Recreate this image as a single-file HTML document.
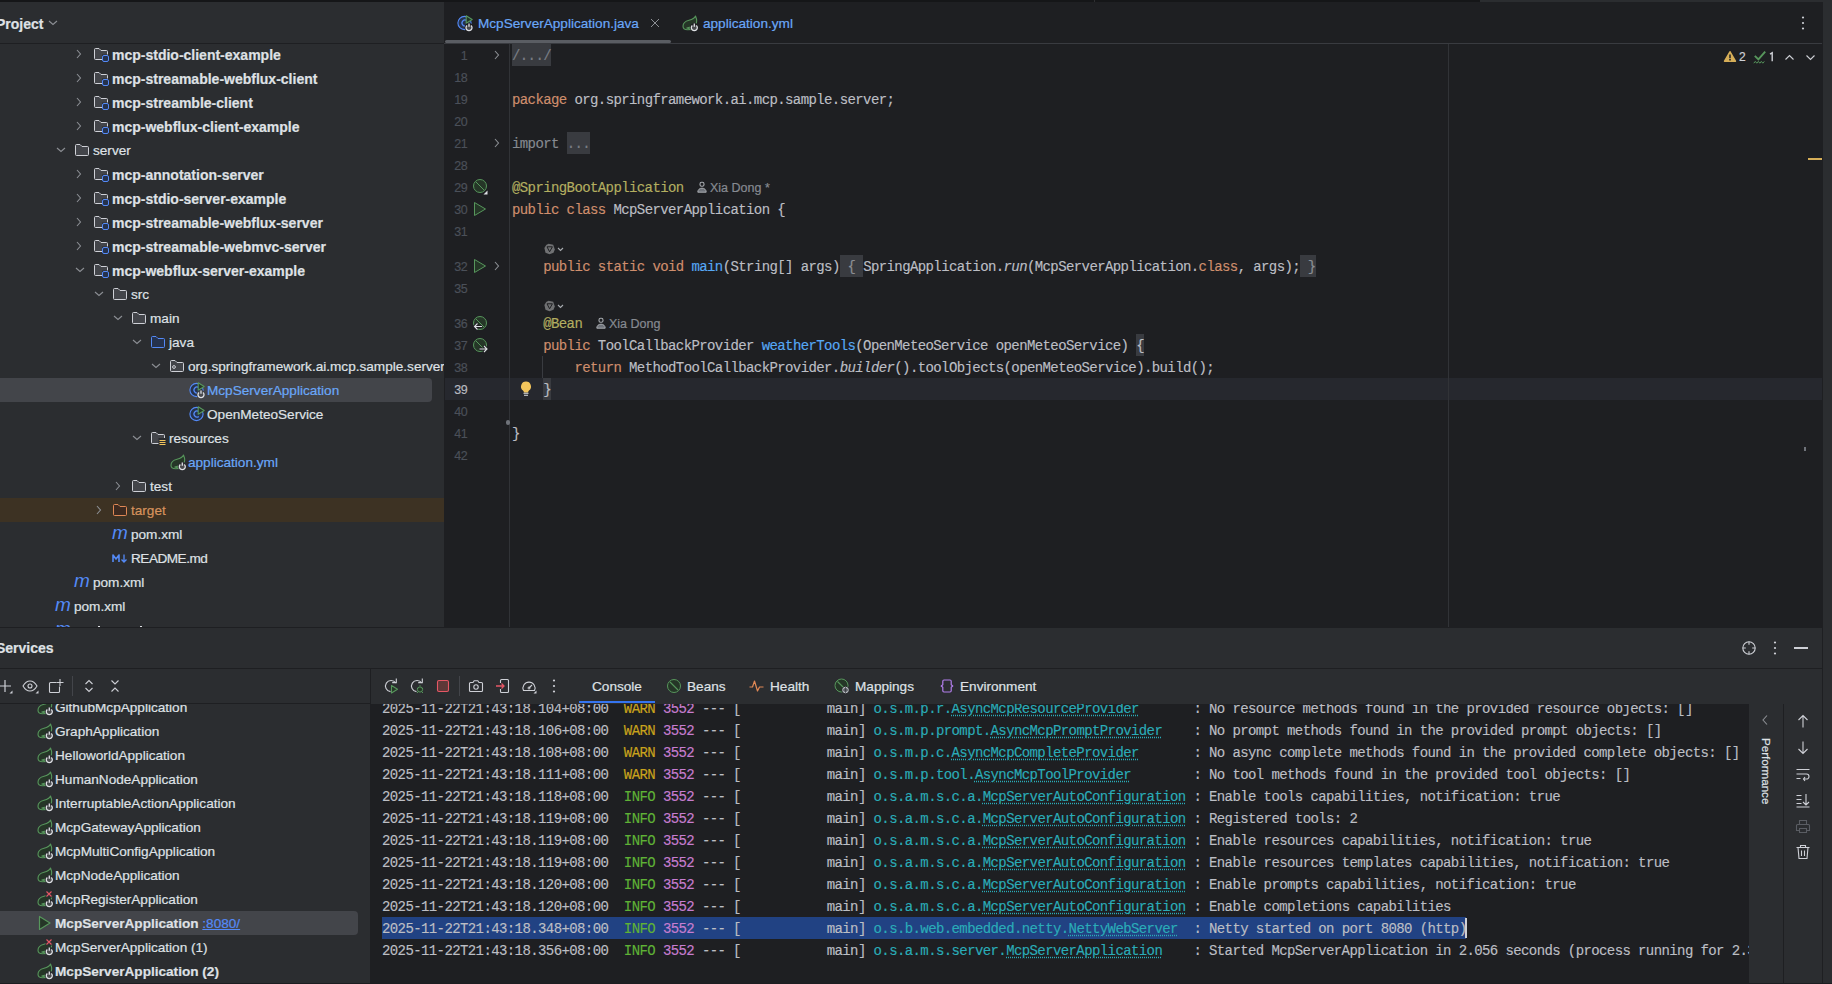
<!DOCTYPE html><html><head><meta charset="utf-8"><style>
*{margin:0;padding:0;box-sizing:border-box}
html,body{width:1832px;height:984px;overflow:hidden;background:#1E1F22}
body{position:relative;font-family:"Liberation Sans",sans-serif;color:#DFE1E5}
.a{position:absolute}
.ui{font-family:"Liberation Sans",sans-serif;font-size:13.6px;white-space:pre;color:#DFE1E5;-webkit-text-stroke:0.2px currentColor}
.b{font-weight:700;font-size:14px}
.m{font-family:"Liberation Mono",monospace;font-size:14px;letter-spacing:-0.6px;white-space:pre;color:#BCBEC4;-webkit-text-stroke:0.15px currentColor}
.kw{color:#CF8E6D}
.an{color:#B3AE60}
.fn{color:#56A8F5}
.it{font-style:italic}
.fold{}
svg{position:absolute;overflow:visible}
</style></head><body>
<div class="a" style="left:0;top:0;width:1832px;height:2px;background:#151618"></div>
<div class="a" style="left:1480px;top:0;width:352px;height:2px;background:#2B2D30"></div>
<div class="a" style="left:1094px;top:0;width:1px;height:2px;background:#2E2F31"></div>
<div class="a" style="left:0;top:2px;width:444px;height:625px;background:#2B2D30;overflow:hidden">
<div class="a" style="left:0;top:41px;width:444px;height:1px;background:#1E1F22"></div>
<div class="a ui b" style="left:-4px;top:13px;line-height:18px">Project</div>
<svg style="left:45px;top:17px" width="16" height="8" viewBox="0 0 16 8"><path d="M4 2l4 3.5L12 2" fill="none" stroke="#8C8F94" stroke-width="1.1"/></svg>
<div class="a" style="left:0;top:376px;width:432px;height:24px;background:#43454A;border-radius:0 4px 4px 0"></div>
<div class="a" style="left:0;top:496px;width:444px;height:24px;background:#3D3223"></div>
<svg style="left:75px;top:44px" width="8" height="16" viewBox="0 0 8 16"><path d="M2 4l3.5 4L2 12" fill="none" stroke="#8C8F94" stroke-width="1.1"/></svg>
<svg style="left:93px;top:44px" width="16" height="16" viewBox="0 0 16 16"><path d="M1.5 3.5a1 1 0 0 1 1-1h3.5l2 2h5.5a1 1 0 0 1 1 1v7a1 1 0 0 1-1 1h-11a1 1 0 0 1-1-1z" fill="#43454A" stroke="#CED0D6"/><rect x="9" y="8.5" width="7" height="7" fill="#2B2D30"/><rect x="9.5" y="9.5" width="6" height="6" rx="1.5" fill="#25324D" stroke="#548AF7"/></svg>
<div class="a ui b" style="left:112px;top:41px;line-height:24px">mcp-stdio-client-example</div>
<svg style="left:75px;top:68px" width="8" height="16" viewBox="0 0 8 16"><path d="M2 4l3.5 4L2 12" fill="none" stroke="#8C8F94" stroke-width="1.1"/></svg>
<svg style="left:93px;top:68px" width="16" height="16" viewBox="0 0 16 16"><path d="M1.5 3.5a1 1 0 0 1 1-1h3.5l2 2h5.5a1 1 0 0 1 1 1v7a1 1 0 0 1-1 1h-11a1 1 0 0 1-1-1z" fill="#43454A" stroke="#CED0D6"/><rect x="9" y="8.5" width="7" height="7" fill="#2B2D30"/><rect x="9.5" y="9.5" width="6" height="6" rx="1.5" fill="#25324D" stroke="#548AF7"/></svg>
<div class="a ui b" style="left:112px;top:65px;line-height:24px">mcp-streamable-webflux-client</div>
<svg style="left:75px;top:92px" width="8" height="16" viewBox="0 0 8 16"><path d="M2 4l3.5 4L2 12" fill="none" stroke="#8C8F94" stroke-width="1.1"/></svg>
<svg style="left:93px;top:92px" width="16" height="16" viewBox="0 0 16 16"><path d="M1.5 3.5a1 1 0 0 1 1-1h3.5l2 2h5.5a1 1 0 0 1 1 1v7a1 1 0 0 1-1 1h-11a1 1 0 0 1-1-1z" fill="#43454A" stroke="#CED0D6"/><rect x="9" y="8.5" width="7" height="7" fill="#2B2D30"/><rect x="9.5" y="9.5" width="6" height="6" rx="1.5" fill="#25324D" stroke="#548AF7"/></svg>
<div class="a ui b" style="left:112px;top:89px;line-height:24px">mcp-streamble-client</div>
<svg style="left:75px;top:116px" width="8" height="16" viewBox="0 0 8 16"><path d="M2 4l3.5 4L2 12" fill="none" stroke="#8C8F94" stroke-width="1.1"/></svg>
<svg style="left:93px;top:116px" width="16" height="16" viewBox="0 0 16 16"><path d="M1.5 3.5a1 1 0 0 1 1-1h3.5l2 2h5.5a1 1 0 0 1 1 1v7a1 1 0 0 1-1 1h-11a1 1 0 0 1-1-1z" fill="#43454A" stroke="#CED0D6"/><rect x="9" y="8.5" width="7" height="7" fill="#2B2D30"/><rect x="9.5" y="9.5" width="6" height="6" rx="1.5" fill="#25324D" stroke="#548AF7"/></svg>
<div class="a ui b" style="left:112px;top:113px;line-height:24px">mcp-webflux-client-example</div>
<svg style="left:53px;top:144px" width="16" height="8" viewBox="0 0 16 8"><path d="M4 2l4 3.5L12 2" fill="none" stroke="#8C8F94" stroke-width="1.1"/></svg>
<svg style="left:74px;top:140px" width="16" height="16" viewBox="0 0 16 16"><path d="M1.5 3.5a1 1 0 0 1 1-1h3.5l2 2h5.5a1 1 0 0 1 1 1v7a1 1 0 0 1-1 1h-11a1 1 0 0 1-1-1z" fill="#43454A" stroke="#CED0D6"/></svg>
<div class="a ui " style="left:93px;top:137px;line-height:24px">server</div>
<svg style="left:75px;top:164px" width="8" height="16" viewBox="0 0 8 16"><path d="M2 4l3.5 4L2 12" fill="none" stroke="#8C8F94" stroke-width="1.1"/></svg>
<svg style="left:93px;top:164px" width="16" height="16" viewBox="0 0 16 16"><path d="M1.5 3.5a1 1 0 0 1 1-1h3.5l2 2h5.5a1 1 0 0 1 1 1v7a1 1 0 0 1-1 1h-11a1 1 0 0 1-1-1z" fill="#43454A" stroke="#CED0D6"/><rect x="9" y="8.5" width="7" height="7" fill="#2B2D30"/><rect x="9.5" y="9.5" width="6" height="6" rx="1.5" fill="#25324D" stroke="#548AF7"/></svg>
<div class="a ui b" style="left:112px;top:161px;line-height:24px">mcp-annotation-server</div>
<svg style="left:75px;top:188px" width="8" height="16" viewBox="0 0 8 16"><path d="M2 4l3.5 4L2 12" fill="none" stroke="#8C8F94" stroke-width="1.1"/></svg>
<svg style="left:93px;top:188px" width="16" height="16" viewBox="0 0 16 16"><path d="M1.5 3.5a1 1 0 0 1 1-1h3.5l2 2h5.5a1 1 0 0 1 1 1v7a1 1 0 0 1-1 1h-11a1 1 0 0 1-1-1z" fill="#43454A" stroke="#CED0D6"/><rect x="9" y="8.5" width="7" height="7" fill="#2B2D30"/><rect x="9.5" y="9.5" width="6" height="6" rx="1.5" fill="#25324D" stroke="#548AF7"/></svg>
<div class="a ui b" style="left:112px;top:185px;line-height:24px">mcp-stdio-server-example</div>
<svg style="left:75px;top:212px" width="8" height="16" viewBox="0 0 8 16"><path d="M2 4l3.5 4L2 12" fill="none" stroke="#8C8F94" stroke-width="1.1"/></svg>
<svg style="left:93px;top:212px" width="16" height="16" viewBox="0 0 16 16"><path d="M1.5 3.5a1 1 0 0 1 1-1h3.5l2 2h5.5a1 1 0 0 1 1 1v7a1 1 0 0 1-1 1h-11a1 1 0 0 1-1-1z" fill="#43454A" stroke="#CED0D6"/><rect x="9" y="8.5" width="7" height="7" fill="#2B2D30"/><rect x="9.5" y="9.5" width="6" height="6" rx="1.5" fill="#25324D" stroke="#548AF7"/></svg>
<div class="a ui b" style="left:112px;top:209px;line-height:24px">mcp-streamable-webflux-server</div>
<svg style="left:75px;top:236px" width="8" height="16" viewBox="0 0 8 16"><path d="M2 4l3.5 4L2 12" fill="none" stroke="#8C8F94" stroke-width="1.1"/></svg>
<svg style="left:93px;top:236px" width="16" height="16" viewBox="0 0 16 16"><path d="M1.5 3.5a1 1 0 0 1 1-1h3.5l2 2h5.5a1 1 0 0 1 1 1v7a1 1 0 0 1-1 1h-11a1 1 0 0 1-1-1z" fill="#43454A" stroke="#CED0D6"/><rect x="9" y="8.5" width="7" height="7" fill="#2B2D30"/><rect x="9.5" y="9.5" width="6" height="6" rx="1.5" fill="#25324D" stroke="#548AF7"/></svg>
<div class="a ui b" style="left:112px;top:233px;line-height:24px">mcp-streamable-webmvc-server</div>
<svg style="left:72px;top:264px" width="16" height="8" viewBox="0 0 16 8"><path d="M4 2l4 3.5L12 2" fill="none" stroke="#8C8F94" stroke-width="1.1"/></svg>
<svg style="left:93px;top:260px" width="16" height="16" viewBox="0 0 16 16"><path d="M1.5 3.5a1 1 0 0 1 1-1h3.5l2 2h5.5a1 1 0 0 1 1 1v7a1 1 0 0 1-1 1h-11a1 1 0 0 1-1-1z" fill="#43454A" stroke="#CED0D6"/><rect x="9" y="8.5" width="7" height="7" fill="#2B2D30"/><rect x="9.5" y="9.5" width="6" height="6" rx="1.5" fill="#25324D" stroke="#548AF7"/></svg>
<div class="a ui b" style="left:112px;top:257px;line-height:24px">mcp-webflux-server-example</div>
<svg style="left:91px;top:288px" width="16" height="8" viewBox="0 0 16 8"><path d="M4 2l4 3.5L12 2" fill="none" stroke="#8C8F94" stroke-width="1.1"/></svg>
<svg style="left:112px;top:284px" width="16" height="16" viewBox="0 0 16 16"><path d="M1.5 3.5a1 1 0 0 1 1-1h3.5l2 2h5.5a1 1 0 0 1 1 1v7a1 1 0 0 1-1 1h-11a1 1 0 0 1-1-1z" fill="#43454A" stroke="#CED0D6"/></svg>
<div class="a ui " style="left:131px;top:281px;line-height:24px">src</div>
<svg style="left:110px;top:312px" width="16" height="8" viewBox="0 0 16 8"><path d="M4 2l4 3.5L12 2" fill="none" stroke="#8C8F94" stroke-width="1.1"/></svg>
<svg style="left:131px;top:308px" width="16" height="16" viewBox="0 0 16 16"><path d="M1.5 3.5a1 1 0 0 1 1-1h3.5l2 2h5.5a1 1 0 0 1 1 1v7a1 1 0 0 1-1 1h-11a1 1 0 0 1-1-1z" fill="#43454A" stroke="#CED0D6"/></svg>
<div class="a ui " style="left:150px;top:305px;line-height:24px">main</div>
<svg style="left:129px;top:336px" width="16" height="8" viewBox="0 0 16 8"><path d="M4 2l4 3.5L12 2" fill="none" stroke="#8C8F94" stroke-width="1.1"/></svg>
<svg style="left:150px;top:332px" width="16" height="16" viewBox="0 0 16 16"><path d="M1.5 3.5a1 1 0 0 1 1-1h3.5l2 2h5.5a1 1 0 0 1 1 1v7a1 1 0 0 1-1 1h-11a1 1 0 0 1-1-1z" fill="#25324D" stroke="#548AF7"/></svg>
<div class="a ui " style="left:169px;top:329px;line-height:24px">java</div>
<svg style="left:148px;top:360px" width="16" height="8" viewBox="0 0 16 8"><path d="M4 2l4 3.5L12 2" fill="none" stroke="#8C8F94" stroke-width="1.1"/></svg>
<svg style="left:169px;top:356px" width="16" height="16" viewBox="0 0 16 16"><path d="M1.5 3.5a1 1 0 0 1 1-1h3.5l2 2h5.5a1 1 0 0 1 1 1v7a1 1 0 0 1-1 1h-11a1 1 0 0 1-1-1z" fill="#43454A" stroke="#CED0D6"/><circle cx="5" cy="9" r="1.4" fill="none" stroke="#CED0D6" stroke-width="1"/></svg>
<div class="a ui " style="left:188px;top:353px;line-height:24px">org.springframework.ai.mcp.sample.server</div>
<svg style="left:189px;top:380px" width="16" height="16" viewBox="0 0 16 16"><circle cx="7.5" cy="8" r="6.6" fill="#25324D" stroke="#548AF7" stroke-width="1.1"/><path d="M9.8 5.6a3 3 0 1 0 0 4.8" fill="none" stroke="#548AF7" stroke-width="1.2"/><path d="M9.2 0.8v7.4l6-3.7z" fill="#253627" stroke="#57965C" stroke-width="1.1" stroke-linejoin="round"/><circle cx="12" cy="12.3" r="4.4" fill="#43454A"/><circle cx="12" cy="12.5" r="2.6" fill="#4A4B4F"/><path d="M10 10.4a3 3 0 1 0 4 0" fill="none" stroke="#DFE1E5" stroke-width="1.3"/><path d="M12 8.4v3.4" stroke="#DFE1E5" stroke-width="1.3"/></svg>
<div class="a ui " style="left:207px;top:377px;line-height:24px;color:#6AA7F8">McpServerApplication</div>
<svg style="left:189px;top:404px" width="16" height="16" viewBox="0 0 16 16"><circle cx="7.5" cy="8" r="6.6" fill="#25324D" stroke="#548AF7" stroke-width="1.1"/><path d="M9.8 5.6a3 3 0 1 0 0 4.8" fill="none" stroke="#548AF7" stroke-width="1.2"/><path d="M9.2 0.8v7.4l6-3.7z" fill="#253627" stroke="#57965C" stroke-width="1.1" stroke-linejoin="round"/></svg>
<div class="a ui " style="left:207px;top:401px;line-height:24px">OpenMeteoService</div>
<svg style="left:129px;top:432px" width="16" height="8" viewBox="0 0 16 8"><path d="M4 2l4 3.5L12 2" fill="none" stroke="#8C8F94" stroke-width="1.1"/></svg>
<svg style="left:150px;top:428px" width="16" height="16" viewBox="0 0 16 16"><path d="M1.5 3.5a1 1 0 0 1 1-1h3.5l2 2h5.5a1 1 0 0 1 1 1v7a1 1 0 0 1-1 1h-11a1 1 0 0 1-1-1z" fill="#43454A" stroke="#CED0D6"/><rect x="8.5" y="8" width="8" height="8" fill="#2B2D30"/><path d="M9.5 10.5h6M9.5 12.5h6M9.5 14.5h6" stroke="#F2C55C" stroke-width="1"/></svg>
<div class="a ui " style="left:169px;top:425px;line-height:24px">resources</div>
<svg style="left:170px;top:452px" width="16" height="16" viewBox="0 0 16 16"><path d="M13.5 1C12.5 3.5 10 4.5 7 5.3C3 6.300 1 8.800 1 11.300C1 14 3 14.800 5.500 14.800L11 14.500C8.500 14 6 13.700 4.800 13C8 12.500 11 12 13.300 10C15 8 15 4.500 13.500 1Z" fill="#253627" stroke="#57965C" stroke-width="1.1" stroke-linejoin="round"/><circle cx="12.3" cy="12.3" r="4.4" fill="#2B2D30"/><circle cx="12.3" cy="12.5" r="2.6" fill="#4A4B4F"/><path d="M10.3 10.4a3 3 0 1 0 4 0" fill="none" stroke="#DFE1E5" stroke-width="1.3"/><path d="M12.3 8.4v3.4" stroke="#DFE1E5" stroke-width="1.3"/></svg>
<div class="a ui " style="left:188px;top:449px;line-height:24px;color:#6AA7F8">application.yml</div>
<svg style="left:114px;top:476px" width="8" height="16" viewBox="0 0 8 16"><path d="M2 4l3.5 4L2 12" fill="none" stroke="#8C8F94" stroke-width="1.1"/></svg>
<svg style="left:131px;top:476px" width="16" height="16" viewBox="0 0 16 16"><path d="M1.5 3.5a1 1 0 0 1 1-1h3.5l2 2h5.5a1 1 0 0 1 1 1v7a1 1 0 0 1-1 1h-11a1 1 0 0 1-1-1z" fill="#43454A" stroke="#CED0D6"/></svg>
<div class="a ui " style="left:150px;top:473px;line-height:24px">test</div>
<svg style="left:95px;top:500px" width="8" height="16" viewBox="0 0 8 16"><path d="M2 4l3.5 4L2 12" fill="none" stroke="#8C8F94" stroke-width="1.1"/></svg>
<svg style="left:112px;top:500px" width="16" height="16" viewBox="0 0 16 16"><path d="M1.5 3.5a1 1 0 0 1 1-1h3.5l2 2h5.5a1 1 0 0 1 1 1v7a1 1 0 0 1-1 1h-11a1 1 0 0 1-1-1z" fill="#3D2A20" stroke="#E08855"/></svg>
<div class="a ui " style="left:131px;top:497px;line-height:24px;color:#D6925D">target</div>
<div class="a" style="left:112px;top:522px;font-family:'Liberation Sans';font-style:italic;font-size:19px;line-height:18px;color:#548AF7;letter-spacing:-1px">m</div>
<div class="a ui " style="left:131px;top:521px;line-height:24px">pom.xml</div>
<svg style="left:112px;top:548px" width="16" height="16" viewBox="0 0 16 16"><path d="M1 12V5l3 4 3-4v7" fill="none" stroke="#548AF7" stroke-width="1.6" stroke-linejoin="round"/><path d="M12 4.5v7.5M9.5 9.5L12 12l2.5-2.5" fill="none" stroke="#548AF7" stroke-width="1.3"/></svg>
<div class="a ui " style="left:131px;top:545px;line-height:24px;letter-spacing:-0.5px">README.md</div>
<div class="a" style="left:74px;top:570px;font-family:'Liberation Sans';font-style:italic;font-size:19px;line-height:18px;color:#548AF7;letter-spacing:-1px">m</div>
<div class="a ui " style="left:93px;top:569px;line-height:24px">pom.xml</div>
<div class="a" style="left:55px;top:594px;font-family:'Liberation Sans';font-style:italic;font-size:19px;line-height:18px;color:#548AF7;letter-spacing:-1px">m</div>
<div class="a ui " style="left:74px;top:593px;line-height:24px">pom.xml</div>
<div class="a" style="left:55px;top:618px;font-family:'Liberation Sans';font-style:italic;font-size:19px;line-height:18px;color:#548AF7;letter-spacing:-1px">m</div>
<div class="a" style="left:98px;top:624px;width:2px;height:2px;background:#DFE1E5"></div><div class="a" style="left:140px;top:624px;width:2px;height:2px;background:#DFE1E5"></div>
</div>
<div class="a" style="left:444px;top:2px;width:1378px;height:625px;background:#1E1F22;overflow:hidden">
<div class="a" style="left:0;top:41px;width:1378px;height:1px;background:#393B40"></div>
<svg style="left:13px;top:13px" width="16" height="16" viewBox="0 0 16 16"><circle cx="7.5" cy="8" r="6.6" fill="#25324D" stroke="#548AF7" stroke-width="1.1"/><path d="M9.8 5.6a3 3 0 1 0 0 4.8" fill="none" stroke="#548AF7" stroke-width="1.2"/><path d="M9.2 0.8v7.4l6-3.7z" fill="#253627" stroke="#57965C" stroke-width="1.1" stroke-linejoin="round"/><circle cx="12" cy="12.3" r="4.4" fill="#1E1F22"/><circle cx="12" cy="12.5" r="2.6" fill="#4A4B4F"/><path d="M10 10.4a3 3 0 1 0 4 0" fill="none" stroke="#DFE1E5" stroke-width="1.3"/><path d="M12 8.4v3.4" stroke="#DFE1E5" stroke-width="1.3"/></svg>
<div class="a ui" style="left:34px;top:10px;line-height:24px;color:#6AA7F8">McpServerApplication.java</div>
<svg style="left:206px;top:16px" width="10" height="10" viewBox="0 0 10 10"><path d="M1 1l8 8M9 1l-8 8" stroke="#8C8F94" stroke-width="1"/></svg>
<div class="a" style="left:1px;top:38px;width:226px;height:3px;border-radius:2px;background:#5A5D63"></div>
<svg style="left:238px;top:13px" width="16" height="16" viewBox="0 0 16 16"><path d="M13.5 1C12.5 3.5 10 4.5 7 5.3C3 6.300 1 8.800 1 11.300C1 14 3 14.800 5.500 14.800L11 14.500C8.500 14 6 13.700 4.800 13C8 12.500 11 12 13.300 10C15 8 15 4.500 13.500 1Z" fill="#253627" stroke="#57965C" stroke-width="1.1" stroke-linejoin="round"/><circle cx="12.3" cy="12.3" r="4.4" fill="#1E1F22"/><circle cx="12.3" cy="12.5" r="2.6" fill="#4A4B4F"/><path d="M10.3 10.4a3 3 0 1 0 4 0" fill="none" stroke="#DFE1E5" stroke-width="1.3"/><path d="M12.3 8.4v3.4" stroke="#DFE1E5" stroke-width="1.3"/></svg>
<div class="a ui" style="left:259px;top:10px;line-height:24px;color:#6AA7F8">application.yml</div>
<svg style="left:1353px;top:13px" width="12" height="16" viewBox="0 0 12 16"><circle cx="6" cy="2.5" r="1.1" fill="#CED0D6"/><circle cx="6" cy="8" r="1.1" fill="#CED0D6"/><circle cx="6" cy="13.5" r="1.1" fill="#CED0D6"/></svg>
<div class="a" style="left:1px;top:376px;width:1377px;height:22px;background:#26282E"></div>
<div class="a" style="left:65px;top:42px;width:1px;height:583px;background:#313337"></div>
<div class="a" style="left:1004px;top:42px;width:1px;height:583px;background:#313337"></div>
<div class="a" style="left:68px;top:42px;width:39px;height:22px;background:#393B40"></div>
<div class="a" style="left:123px;top:130px;width:23px;height:22px;background:#393B40"></div>
<div class="a" style="left:396px;top:253px;width:23px;height:22px;background:#393B40"></div>
<div class="a" style="left:856px;top:253px;width:16px;height:22px;background:#393B40"></div>
<div class="a" style="left:692px;top:332px;width:8px;height:22px;background:#393B40"></div>
<div class="a" style="left:99px;top:376px;width:8px;height:22px;background:#393B40"></div>
<div class="a m" style="left:-14px;width:37px;text-align:right;top:43px;line-height:22px;font-family:Liberation Sans;font-size:12.5px;color:#4B5059">1</div>
<div class="a m" style="left:68px;top:43px;line-height:22px"><span class="fold" style="color:#7A7E85">/.../</span></div>
<div class="a m" style="left:-14px;width:37px;text-align:right;top:65px;line-height:22px;font-family:Liberation Sans;font-size:12.5px;color:#4B5059">18</div>
<div class="a m" style="left:-14px;width:37px;text-align:right;top:87px;line-height:22px;font-family:Liberation Sans;font-size:12.5px;color:#4B5059">19</div>
<div class="a m" style="left:68px;top:87px;line-height:22px"><span class="kw">package</span> org.springframework.ai.mcp.sample.server;</div>
<div class="a m" style="left:-14px;width:37px;text-align:right;top:109px;line-height:22px;font-family:Liberation Sans;font-size:12.5px;color:#4B5059">20</div>
<div class="a m" style="left:-14px;width:37px;text-align:right;top:131px;line-height:22px;font-family:Liberation Sans;font-size:12.5px;color:#4B5059">21</div>
<div class="a m" style="left:68px;top:131px;line-height:22px"><span style="color:#868A91">import</span> <span class="fold" style="color:#7A7E85">...</span></div>
<div class="a m" style="left:-14px;width:37px;text-align:right;top:153px;line-height:22px;font-family:Liberation Sans;font-size:12.5px;color:#4B5059">28</div>
<div class="a m" style="left:-14px;width:37px;text-align:right;top:175px;line-height:22px;font-family:Liberation Sans;font-size:12.5px;color:#4B5059">29</div>
<div class="a m" style="left:68px;top:175px;line-height:22px"><span class="an">@SpringBootApplication</span></div>
<div class="a m" style="left:-14px;width:37px;text-align:right;top:197px;line-height:22px;font-family:Liberation Sans;font-size:12.5px;color:#4B5059">30</div>
<div class="a m" style="left:68px;top:197px;line-height:22px"><span class="kw">public class</span> McpServerApplication {</div>
<div class="a m" style="left:-14px;width:37px;text-align:right;top:219px;line-height:22px;font-family:Liberation Sans;font-size:12.5px;color:#4B5059">31</div>
<div class="a m" style="left:-14px;width:37px;text-align:right;top:254px;line-height:22px;font-family:Liberation Sans;font-size:12.5px;color:#4B5059">32</div>
<div class="a m" style="left:68px;top:254px;line-height:22px">    <span class="kw">public static void</span> <span class="fn">main</span>(String[] args)<span style="color:#8C8F94"> { </span>SpringApplication.<span class="it">run</span>(McpServerApplication.<span class="kw">class</span>, args);<span style="color:#8C8F94"> }</span></div>
<div class="a m" style="left:-14px;width:37px;text-align:right;top:276px;line-height:22px;font-family:Liberation Sans;font-size:12.5px;color:#4B5059">35</div>
<div class="a m" style="left:-14px;width:37px;text-align:right;top:311px;line-height:22px;font-family:Liberation Sans;font-size:12.5px;color:#4B5059">36</div>
<div class="a m" style="left:68px;top:311px;line-height:22px">    <span class="an">@Bean</span></div>
<div class="a m" style="left:-14px;width:37px;text-align:right;top:333px;line-height:22px;font-family:Liberation Sans;font-size:12.5px;color:#4B5059">37</div>
<div class="a m" style="left:68px;top:333px;line-height:22px">    <span class="kw">public</span> ToolCallbackProvider <span class="fn">weatherTools</span>(OpenMeteoService openMeteoService) <span class="fold">{</span></div>
<div class="a m" style="left:-14px;width:37px;text-align:right;top:355px;line-height:22px;font-family:Liberation Sans;font-size:12.5px;color:#4B5059">38</div>
<div class="a m" style="left:68px;top:355px;line-height:22px">        <span class="kw">return</span> MethodToolCallbackProvider.<span class="it">builder</span>().toolObjects(openMeteoService).build();</div>
<div class="a m" style="left:-14px;width:37px;text-align:right;top:377px;line-height:22px;font-family:Liberation Sans;font-size:12.5px;color:#B8BAC0">39</div>
<div class="a m" style="left:68px;top:377px;line-height:22px">    <span class="fold">}</span></div>
<div class="a m" style="left:-14px;width:37px;text-align:right;top:399px;line-height:22px;font-family:Liberation Sans;font-size:12.5px;color:#4B5059">40</div>
<div class="a m" style="left:-14px;width:37px;text-align:right;top:421px;line-height:22px;font-family:Liberation Sans;font-size:12.5px;color:#4B5059">41</div>
<div class="a m" style="left:68px;top:421px;line-height:22px">}</div>
<div class="a m" style="left:-14px;width:37px;text-align:right;top:443px;line-height:22px;font-family:Liberation Sans;font-size:12.5px;color:#4B5059">42</div>
<div class="a" style="left:98px;top:354px;width:1px;height:22px;background:#393B40"></div>
<svg style="left:49px;top:45px" width="8" height="16" viewBox="0 0 8 16"><path d="M2 4l3.5 4L2 12" fill="none" stroke="#8C8F94" stroke-width="1.1"/></svg>
<svg style="left:49px;top:133px" width="8" height="16" viewBox="0 0 8 16"><path d="M2 4l3.5 4L2 12" fill="none" stroke="#8C8F94" stroke-width="1.1"/></svg>
<svg style="left:49px;top:256px" width="8" height="16" viewBox="0 0 8 16"><path d="M2 4l3.5 4L2 12" fill="none" stroke="#8C8F94" stroke-width="1.1"/></svg>
<div class="a" style="left:62px;top:418px;width:4px;height:5px;border-radius:2px;background:#6F737A"></div>
<svg style="left:29px;top:177px" width="16" height="16" viewBox="0 0 16 16"><circle cx="7" cy="7" r="6.5" fill="#253627" stroke="#57965C"/><path d="M2.8 2.8l8.4 8.4" stroke="#57965C" stroke-width="1"/><path d="M14.5 11.5v4h-4z" fill="#DFE1E5"/></svg>
<svg style="left:29px;top:199px" width="16" height="16" viewBox="0 0 16 16"><path d="M1.5 1.5v13l11-6.5z" fill="#253627" stroke="#57965C" stroke-linejoin="round"/></svg>
<svg style="left:29px;top:256px" width="16" height="16" viewBox="0 0 16 16"><path d="M1.5 1.5v13l11-6.5z" fill="#253627" stroke="#57965C" stroke-linejoin="round"/></svg>
<svg style="left:29px;top:314px" width="16" height="16" viewBox="0 0 16 16"><circle cx="7" cy="7" r="6.5" fill="#253627" stroke="#57965C"/><path d="M2.8 2.8l8.4 8.4" stroke="#57965C" stroke-width="1"/><path d="M9 10.5H1.5M4.5 7.5l-3 3 3 3" fill="none" stroke="#1E1F22" stroke-width="3"/><path d="M9 10.5H1.5M4.5 7.5l-3 3 3 3" fill="none" stroke="#DFE1E5" stroke-width="1.1"/></svg>
<svg style="left:29px;top:336px" width="16" height="16" viewBox="0 0 16 16"><circle cx="7" cy="7" r="6.5" fill="#253627" stroke="#57965C"/><path d="M2.8 2.8l8.4 8.4" stroke="#57965C" stroke-width="1"/><path d="M6.5 11h7.5M11 8l3 3-3 3" fill="none" stroke="#1E1F22" stroke-width="3"/><path d="M6.5 11h7.5M11 8l3 3-3 3" fill="none" stroke="#DFE1E5" stroke-width="1.1"/></svg>
<svg style="left:74px;top:378px" width="16" height="16" viewBox="0 0 16 16"><path d="M8 1.5a5 5 0 0 0-3 9c.6.5 1 1.2 1 2h4c0-.8.4-1.5 1-2a5 5 0 0 0-3-9z" fill="#F2C55C"/><path d="M5.5 13.3h5M6 15.3h4" stroke="#DFE1E5" stroke-width="1.1"/></svg>
<svg style="left:100px;top:241px" width="20" height="12" viewBox="0 0 20 12"><path d="M4.5 0.8L9.2 1.8L10.8 6.5L9.5 9.8L5.5 11.2L1.5 9.8L0.4 5L2.2 2z" fill="#707173"/><path d="M3 3.8h5.4L5.6 8.8z" fill="none" stroke="#1E1F22" stroke-width="1"/><path d="M14 5l2.5 2.5L19 5" fill="none" stroke="#A8ABB0" stroke-width="1.1"/></svg>
<svg style="left:100px;top:298px" width="20" height="12" viewBox="0 0 20 12"><path d="M4.5 0.8L9.2 1.8L10.8 6.5L9.5 9.8L5.5 11.2L1.5 9.8L0.4 5L2.2 2z" fill="#707173"/><path d="M3 3.8h5.4L5.6 8.8z" fill="none" stroke="#1E1F22" stroke-width="1"/><path d="M14 5l2.5 2.5L19 5" fill="none" stroke="#A8ABB0" stroke-width="1.1"/></svg>
<svg style="left:253px;top:179px" width="10" height="12" viewBox="0 0 10 12"><rect x="3" y="1.3" width="4" height="4" rx="1.6" fill="none" stroke="#A8ABB0" stroke-width="1.1"/><path d="M0.8 11.2c0-2.500 1.800-4 4.200-4s4.200 1.500 4.200 4z" fill="#6F737A" stroke="#A8ABB0" stroke-width="1"/></svg>
<div class="a ui" style="left:266px;top:175px;line-height:22px;font-size:12.5px;color:#868A91">Xia Dong *</div>
<svg style="left:152px;top:315px" width="10" height="12" viewBox="0 0 10 12"><rect x="3" y="1.3" width="4" height="4" rx="1.6" fill="none" stroke="#A8ABB0" stroke-width="1.1"/><path d="M0.8 11.2c0-2.500 1.800-4 4.200-4s4.200 1.500 4.200 4z" fill="#6F737A" stroke="#A8ABB0" stroke-width="1"/></svg>
<div class="a ui" style="left:165px;top:311px;line-height:22px;font-size:12.5px;color:#868A91">Xia Dong</div>
<svg style="left:1279px;top:48px" width="14" height="13" viewBox="0 0 14 13"><path d="M7 1.8L12.4 11.2H1.6z" fill="#D6AE58" stroke="#D6AE58" stroke-width="1.6" stroke-linejoin="round"/><path d="M7 4.6v3.6" stroke="#1E1F22" stroke-width="1.5"/><rect x="6.2" y="9" width="1.6" height="1.5" fill="#1E1F22"/></svg>
<div class="a ui" style="left:1295px;top:44px;line-height:22px;font-size:12px;color:#CED0D6;-webkit-text-stroke:0.2px #CED0D6">2</div>
<svg style="left:1309px;top:48px" width="14" height="15" viewBox="0 0 14 15"><path d="M1.8 5.8l3.6 3.6L12.2 1.6" fill="none" stroke="#57965C" stroke-width="1.9"/><path d="M0.8 13.2l1.5-1.8 1.5 1.8 1.5-1.8 1.5 1.8 1.5-1.8 1.5 1.8 1.5-1.8" fill="none" stroke="#57965C" stroke-width="1"/></svg>
<svg style="left:1325px;top:50px" width="6" height="10" viewBox="0 0 6 10"><path d="M1 2.2L3.2 0.8V9.3" fill="none" stroke="#CED0D6" stroke-width="1.4"/></svg>
<svg style="left:1340px;top:52px" width="11" height="8" viewBox="0 0 11 8"><path d="M1.5 5.5l4-4 4 4" fill="none" stroke="#CED0D6" stroke-width="1.1"/></svg>
<svg style="left:1361px;top:52px" width="11" height="8" viewBox="0 0 11 8"><path d="M1.5 1.5l4 4 4-4" fill="none" stroke="#CED0D6" stroke-width="1.1"/></svg>
<div class="a" style="left:1364px;top:156px;width:14px;height:2px;background:#D6AE58"></div>
<div class="a" style="left:1360px;top:445px;width:2px;height:4px;background:#6F737A"></div>
</div>
<div class="a" style="left:0;top:627px;width:1822px;height:1px;background:#1E1F22;z-index:5"></div>
<div class="a" style="left:1822px;top:2px;width:10px;height:982px;background:#2B2D30;border-left:1px solid #1E1F22"></div>
<div class="a" style="left:0;top:627px;width:1822px;height:357px;background:#2B2D30;overflow:hidden">
<div class="a" style="left:0;top:41px;width:1822px;height:1px;background:#1E1F22"></div>
<div class="a ui b" style="left:-4px;top:12px;line-height:18px">Services</div>
<svg style="left:1741px;top:13px" width="16" height="16" viewBox="0 0 16 16"><circle cx="8" cy="8" r="6.2" fill="none" stroke="#CED0D6" stroke-width="1.1"/><path d="M8 1.8v3M8 11.2v3M1.8 8h3M11.2 8h3" stroke="#CED0D6" stroke-width="1.1"/></svg>
<svg style="left:1769px;top:13px" width="12" height="16" viewBox="0 0 12 16"><circle cx="6" cy="2.5" r="1.1" fill="#CED0D6"/><circle cx="6" cy="8" r="1.1" fill="#CED0D6"/><circle cx="6" cy="13.5" r="1.1" fill="#CED0D6"/></svg>
<div class="a" style="left:1794px;top:20px;width:14px;height:1.5px;background:#CED0D6"></div>
<div class="a" style="left:0;top:76px;width:370px;height:1px;background:#1E1F22"></div>
<div class="a" style="left:370px;top:42px;width:1px;height:315px;background:#1E1F22"></div>
<svg style="left:-3px;top:51px" width="16" height="16" viewBox="0 0 16 16"><path d="M8 2v12M2 8h12" stroke="#CED0D6" stroke-width="1.2"/><path d="M15.5 12.5v3h-3z" fill="#CED0D6"/></svg>
<svg style="left:22px;top:51px" width="16" height="16" viewBox="0 0 16 16"><path d="M1 8c2-3.5 4.5-5 7-5s5 1.5 7 5c-2 3.5-4.5 5-7 5s-5-1.5-7-5z" fill="none" stroke="#CED0D6" stroke-width="1.1"/><circle cx="8" cy="8" r="2" fill="none" stroke="#CED0D6" stroke-width="1.1"/><path d="M16.5 12.5v3h-3z" fill="#CED0D6"/></svg>
<svg style="left:48px;top:51px" width="16" height="16" viewBox="0 0 16 16"><path d="M8.5 4.5h-6a1 1 0 0 0-1 1v8a1 1 0 0 0 1 1h8a1 1 0 0 0 1-1v-5" fill="none" stroke="#CED0D6" stroke-width="1.1"/><path d="M12 1v7M8.5 4.5h7" stroke="#CED0D6" stroke-width="1.1"/></svg>
<div class="a" style="left:72px;top:49px;width:1px;height:20px;background:#43454A"></div>
<svg style="left:81px;top:51px" width="16" height="16" viewBox="0 0 16 16"><path d="M4.5 6l3.5-3.5L11.5 6M4.5 10l3.5 3.5 3.5-3.5" fill="none" stroke="#CED0D6" stroke-width="1.1"/></svg>
<svg style="left:107px;top:51px" width="16" height="16" viewBox="0 0 16 16"><path d="M4.5 2.5L8 6l3.5-3.5M4.5 13.5L8 10l3.5 3.5" fill="none" stroke="#CED0D6" stroke-width="1.1"/></svg>
<svg style="left:383px;top:51px" width="16" height="16" viewBox="0 0 16 16"><path d="M12.8 5A5.6 5.6 0 1 0 7.5 13.6" fill="none" stroke="#CED0D6" stroke-width="1.1"/><path d="M9.2 4.6h4.1V0.6" fill="none" stroke="#CED0D6" stroke-width="1.1"/><path d="M8.5 7.5v7.5l6-3.75z" fill="#253627" stroke="#57965C" stroke-width="1.1" stroke-linejoin="round"/></svg>
<svg style="left:409px;top:51px" width="16" height="16" viewBox="0 0 16 16"><path d="M12.8 5A5.6 5.6 0 1 0 7.5 13.6" fill="none" stroke="#CED0D6" stroke-width="1.1"/><path d="M9.2 4.6h4.1V0.6" fill="none" stroke="#CED0D6" stroke-width="1.1"/><circle cx="11" cy="11.5" r="2.6" fill="#253627" stroke="#57965C"/><path d="M8 15l1.2-1.2M14 15l-1.2-1.2M8 10l1 .8M14 10l-1 .8M11 8.2v-1" stroke="#57965C" stroke-width="1"/></svg>
<svg style="left:435px;top:51px" width="16" height="16" viewBox="0 0 16 16"><rect x="2.5" y="2.5" width="11" height="11" rx="1.5" fill="#5E3838" stroke="#E55765" stroke-width="1.1"/></svg>
<div class="a" style="left:459px;top:49px;width:1px;height:20px;background:#43454A"></div>
<svg style="left:468px;top:51px" width="16" height="16" viewBox="0 0 16 16"><path d="M1.5 5.5a1 1 0 0 1 1-1h2.5l1.2-1.8h3.6l1.2 1.8h2.5a1 1 0 0 1 1 1v7a1 1 0 0 1-1 1h-11a1 1 0 0 1-1-1z" fill="none" stroke="#CED0D6" stroke-width="1.1"/><circle cx="8" cy="9" r="2.2" fill="none" stroke="#CED0D6" stroke-width="1.1"/></svg>
<svg style="left:495px;top:51px" width="16" height="16" viewBox="0 0 16 16"><path d="M5.5 5V2.5a1 1 0 0 1 1-1h6a1 1 0 0 1 1 1v11a1 1 0 0 1-1 1h-6a1 1 0 0 1-1-1V11" fill="none" stroke="#CED0D6" stroke-width="1.1"/><path d="M1 8h8M6.5 5.5L9 8l-2.5 2.5" fill="none" stroke="#E55765" stroke-width="1.3"/></svg>
<svg style="left:521px;top:51px" width="16" height="16" viewBox="0 0 16 16"><path d="M2.5 12.5a6 6 0 1 1 11 0z" fill="none" stroke="#CED0D6" stroke-width="1.1"/><path d="M8 10l3-3" stroke="#CED0D6" stroke-width="1.1"/><circle cx="8" cy="10" r="1" fill="none" stroke="#CED0D6"/><path d="M15.5 12.5v3h-3z" fill="#CED0D6"/></svg>
<svg style="left:548px;top:51px" width="12" height="16" viewBox="0 0 12 16"><circle cx="6" cy="2.5" r="1.1" fill="#CED0D6"/><circle cx="6" cy="8" r="1.1" fill="#CED0D6"/><circle cx="6" cy="13.5" r="1.1" fill="#CED0D6"/></svg>
<div class="a ui" style="left:592px;top:48px;line-height:24px">Console</div>
<div class="a" style="left:579px;top:74px;width:76px;height:2px;background:#3574F0"></div>
<svg style="left:666px;top:51px" width="16" height="16" viewBox="0 0 16 16"><circle cx="8" cy="8" r="6.5" fill="#253627" stroke="#57965C"/><path d="M4 4l8 8" stroke="#57965C" stroke-width="1.1"/></svg>
<div class="a ui" style="left:687px;top:48px;line-height:24px">Beans</div>
<svg style="left:749px;top:51px" width="16" height="16" viewBox="0 0 16 16"><path d="M0.5 9h3l2-6 3 10 2-4h4" fill="none" stroke="#E08855" stroke-width="1.2" stroke-linejoin="round"/></svg>
<div class="a ui" style="left:770px;top:48px;line-height:24px">Health</div>
<svg style="left:834px;top:51px" width="16" height="16" viewBox="0 0 16 16"><circle cx="7.5" cy="7.5" r="6.5" fill="#253627" stroke="#57965C"/><path d="M3.5 3.5l7 7" stroke="#57965C" stroke-width="1.1"/><circle cx="11.5" cy="12" r="3.8" fill="#2B2D30"/><circle cx="11.5" cy="12" r="2.8" fill="#6F737A" stroke="#CED0D6" stroke-width=".9"/><path d="M8.7 12h5.6M11.5 9.2v5.6" stroke="#2B2D30" stroke-width=".6"/></svg>
<div class="a ui" style="left:855px;top:48px;line-height:24px">Mappings</div>
<svg style="left:939px;top:51px" width="16" height="16" viewBox="0 0 16 16"><path d="M3.8 6.8V3.2A1.2 1.2 0 0 1 5 2H11a1.2 1.2 0 0 1 1.2 1.2V6.8L13.8 8l-1.6 1.2v3.6A1.2 1.2 0 0 1 11 14H5a1.2 1.2 0 0 1-1.2-1.2V9.2L2.2 8z" fill="none" stroke="#B27EEB" stroke-width="1.2" stroke-linejoin="round"/></svg>
<div class="a ui" style="left:960px;top:48px;line-height:24px">Environment</div>
<div class="a" style="left:0;top:77px;width:370px;height:280px;overflow:hidden">
<div class="a" style="left:0;top:207px;width:358px;height:24px;background:#43454A;border-radius:0 4px 4px 0"></div>
<svg style="left:37px;top:-5px" width="16" height="16" viewBox="0 0 16 16"><path d="M13.5 1C12.5 3.5 10 4.5 7 5.3C3 6.300 1 8.800 1 11.300C1 14 3 14.800 5.500 14.800L11 14.500C8.500 14 6 13.700 4.800 13C8 12.500 11 12 13.300 10C15 8 15 4.500 13.500 1Z" fill="#253627" stroke="#57965C" stroke-width="1.1" stroke-linejoin="round"/><circle cx="12.3" cy="12.3" r="4.4" fill="#2B2D30"/><circle cx="12.3" cy="12.5" r="2.6" fill="#4A4B4F"/><path d="M10.3 10.4a3 3 0 1 0 4 0" fill="none" stroke="#DFE1E5" stroke-width="1.3"/><path d="M12.3 8.4v3.4" stroke="#DFE1E5" stroke-width="1.3"/></svg>
<div class="a ui" style="left:55px;top:-8px;line-height:24px;font-size:13.6px">GithubMcpApplication</div>
<svg style="left:37px;top:19px" width="16" height="16" viewBox="0 0 16 16"><path d="M13.5 1C12.5 3.5 10 4.5 7 5.3C3 6.300 1 8.800 1 11.300C1 14 3 14.800 5.500 14.800L11 14.500C8.500 14 6 13.700 4.800 13C8 12.500 11 12 13.300 10C15 8 15 4.500 13.500 1Z" fill="#253627" stroke="#57965C" stroke-width="1.1" stroke-linejoin="round"/><circle cx="12.3" cy="12.3" r="4.4" fill="#2B2D30"/><circle cx="12.3" cy="12.5" r="2.6" fill="#4A4B4F"/><path d="M10.3 10.4a3 3 0 1 0 4 0" fill="none" stroke="#DFE1E5" stroke-width="1.3"/><path d="M12.3 8.4v3.4" stroke="#DFE1E5" stroke-width="1.3"/></svg>
<div class="a ui" style="left:55px;top:16px;line-height:24px;font-size:13.6px">GraphApplication</div>
<svg style="left:37px;top:43px" width="16" height="16" viewBox="0 0 16 16"><path d="M13.5 1C12.5 3.5 10 4.5 7 5.3C3 6.300 1 8.800 1 11.300C1 14 3 14.800 5.500 14.800L11 14.500C8.500 14 6 13.700 4.800 13C8 12.500 11 12 13.300 10C15 8 15 4.500 13.500 1Z" fill="#253627" stroke="#57965C" stroke-width="1.1" stroke-linejoin="round"/><circle cx="12.3" cy="12.3" r="4.4" fill="#2B2D30"/><circle cx="12.3" cy="12.5" r="2.6" fill="#4A4B4F"/><path d="M10.3 10.4a3 3 0 1 0 4 0" fill="none" stroke="#DFE1E5" stroke-width="1.3"/><path d="M12.3 8.4v3.4" stroke="#DFE1E5" stroke-width="1.3"/></svg>
<div class="a ui" style="left:55px;top:40px;line-height:24px;font-size:13.6px">HelloworldApplication</div>
<svg style="left:37px;top:67px" width="16" height="16" viewBox="0 0 16 16"><path d="M13.5 1C12.5 3.5 10 4.5 7 5.3C3 6.300 1 8.800 1 11.300C1 14 3 14.800 5.500 14.800L11 14.500C8.500 14 6 13.700 4.800 13C8 12.500 11 12 13.300 10C15 8 15 4.500 13.500 1Z" fill="#253627" stroke="#57965C" stroke-width="1.1" stroke-linejoin="round"/><circle cx="12.3" cy="12.3" r="4.4" fill="#2B2D30"/><circle cx="12.3" cy="12.5" r="2.6" fill="#4A4B4F"/><path d="M10.3 10.4a3 3 0 1 0 4 0" fill="none" stroke="#DFE1E5" stroke-width="1.3"/><path d="M12.3 8.4v3.4" stroke="#DFE1E5" stroke-width="1.3"/></svg>
<div class="a ui" style="left:55px;top:64px;line-height:24px;font-size:13.6px">HumanNodeApplication</div>
<svg style="left:37px;top:91px" width="16" height="16" viewBox="0 0 16 16"><path d="M13.5 1C12.5 3.5 10 4.5 7 5.3C3 6.300 1 8.800 1 11.300C1 14 3 14.800 5.500 14.800L11 14.500C8.500 14 6 13.700 4.800 13C8 12.500 11 12 13.300 10C15 8 15 4.500 13.500 1Z" fill="#253627" stroke="#57965C" stroke-width="1.1" stroke-linejoin="round"/><circle cx="12.3" cy="12.3" r="4.4" fill="#2B2D30"/><circle cx="12.3" cy="12.5" r="2.6" fill="#4A4B4F"/><path d="M10.3 10.4a3 3 0 1 0 4 0" fill="none" stroke="#DFE1E5" stroke-width="1.3"/><path d="M12.3 8.4v3.4" stroke="#DFE1E5" stroke-width="1.3"/></svg>
<div class="a ui" style="left:55px;top:88px;line-height:24px;font-size:13.6px">InterruptableActionApplication</div>
<svg style="left:37px;top:115px" width="16" height="16" viewBox="0 0 16 16"><path d="M13.5 1C12.5 3.5 10 4.5 7 5.3C3 6.300 1 8.800 1 11.300C1 14 3 14.800 5.500 14.800L11 14.500C8.500 14 6 13.700 4.800 13C8 12.500 11 12 13.300 10C15 8 15 4.500 13.500 1Z" fill="#253627" stroke="#57965C" stroke-width="1.1" stroke-linejoin="round"/><circle cx="12.3" cy="12.3" r="4.4" fill="#2B2D30"/><circle cx="12.3" cy="12.5" r="2.6" fill="#4A4B4F"/><path d="M10.3 10.4a3 3 0 1 0 4 0" fill="none" stroke="#DFE1E5" stroke-width="1.3"/><path d="M12.3 8.4v3.4" stroke="#DFE1E5" stroke-width="1.3"/></svg>
<div class="a ui" style="left:55px;top:112px;line-height:24px;font-size:13.6px">McpGatewayApplication</div>
<svg style="left:37px;top:139px" width="16" height="16" viewBox="0 0 16 16"><path d="M13.5 1C12.5 3.5 10 4.5 7 5.3C3 6.300 1 8.800 1 11.300C1 14 3 14.800 5.500 14.800L11 14.500C8.500 14 6 13.700 4.800 13C8 12.500 11 12 13.300 10C15 8 15 4.500 13.500 1Z" fill="#253627" stroke="#57965C" stroke-width="1.1" stroke-linejoin="round"/><circle cx="12.3" cy="12.3" r="4.4" fill="#2B2D30"/><circle cx="12.3" cy="12.5" r="2.6" fill="#4A4B4F"/><path d="M10.3 10.4a3 3 0 1 0 4 0" fill="none" stroke="#DFE1E5" stroke-width="1.3"/><path d="M12.3 8.4v3.4" stroke="#DFE1E5" stroke-width="1.3"/></svg>
<div class="a ui" style="left:55px;top:136px;line-height:24px;font-size:13.6px">McpMultiConfigApplication</div>
<svg style="left:37px;top:163px" width="16" height="16" viewBox="0 0 16 16"><path d="M13.5 1C12.5 3.5 10 4.5 7 5.3C3 6.300 1 8.800 1 11.300C1 14 3 14.800 5.500 14.800L11 14.500C8.500 14 6 13.700 4.800 13C8 12.500 11 12 13.300 10C15 8 15 4.500 13.500 1Z" fill="#253627" stroke="#57965C" stroke-width="1.1" stroke-linejoin="round"/><circle cx="12.3" cy="12.3" r="4.4" fill="#2B2D30"/><circle cx="12.3" cy="12.5" r="2.6" fill="#4A4B4F"/><path d="M10.3 10.4a3 3 0 1 0 4 0" fill="none" stroke="#DFE1E5" stroke-width="1.3"/><path d="M12.3 8.4v3.4" stroke="#DFE1E5" stroke-width="1.3"/></svg>
<div class="a ui" style="left:55px;top:160px;line-height:24px;font-size:13.6px">McpNodeApplication</div>
<svg style="left:37px;top:187px" width="16" height="16" viewBox="0 0 16 16"><path d="M13.5 1C12.5 3.5 10 4.5 7 5.3C3 6.300 1 8.800 1 11.300C1 14 3 14.800 5.500 14.800L11 14.500C8.500 14 6 13.700 4.800 13C8 12.500 11 12 13.300 10C15 8 15 4.500 13.500 1Z" fill="#253627" stroke="#57965C" stroke-width="1.1" stroke-linejoin="round"/><circle cx="12.3" cy="12.3" r="4.4" fill="#2B2D30"/><circle cx="12.3" cy="12.5" r="2.6" fill="#4A4B4F"/><path d="M10.3 10.4a3 3 0 1 0 4 0" fill="none" stroke="#DFE1E5" stroke-width="1.3"/><path d="M12.3 8.4v3.4" stroke="#DFE1E5" stroke-width="1.3"/><rect x="8.5" y="-0.5" width="7" height="7" fill="#2B2D30"/><path d="M9.5 0.5l5 5M14.5 0.5l-5 5" stroke="#E55765" stroke-width="1.1"/></svg>
<div class="a ui" style="left:55px;top:184px;line-height:24px;font-size:13.6px">McpRegisterApplication</div>
<svg style="left:37px;top:211px" width="16" height="16" viewBox="0 0 16 16"><path d="M2.5 1.5v13l10.5-6.5z" fill="#253627" stroke="#57965C" stroke-width="1.2" stroke-linejoin="round"/></svg>
<div class="a ui b" style="left:55px;top:208px;line-height:24px;font-size:13.6px">McpServerApplication <span style="color:#548AF7;font-weight:400;text-decoration:underline">:8080/</span></div>
<svg style="left:37px;top:235px" width="16" height="16" viewBox="0 0 16 16"><path d="M13.5 1C12.5 3.5 10 4.5 7 5.3C3 6.300 1 8.800 1 11.300C1 14 3 14.800 5.500 14.800L11 14.500C8.500 14 6 13.700 4.800 13C8 12.500 11 12 13.300 10C15 8 15 4.500 13.500 1Z" fill="#253627" stroke="#57965C" stroke-width="1.1" stroke-linejoin="round"/><circle cx="12.3" cy="12.3" r="4.4" fill="#2B2D30"/><circle cx="12.3" cy="12.5" r="2.6" fill="#4A4B4F"/><path d="M10.3 10.4a3 3 0 1 0 4 0" fill="none" stroke="#DFE1E5" stroke-width="1.3"/><path d="M12.3 8.4v3.4" stroke="#DFE1E5" stroke-width="1.3"/><rect x="8.5" y="-0.5" width="7" height="7" fill="#2B2D30"/><path d="M9.5 0.5l5 5M14.5 0.5l-5 5" stroke="#E55765" stroke-width="1.1"/></svg>
<div class="a ui" style="left:55px;top:232px;line-height:24px;font-size:13.6px">McpServerApplication (1)</div>
<svg style="left:37px;top:259px" width="16" height="16" viewBox="0 0 16 16"><path d="M13.5 1C12.5 3.5 10 4.5 7 5.3C3 6.300 1 8.800 1 11.300C1 14 3 14.800 5.500 14.800L11 14.500C8.500 14 6 13.700 4.800 13C8 12.500 11 12 13.300 10C15 8 15 4.500 13.500 1Z" fill="#253627" stroke="#57965C" stroke-width="1.1" stroke-linejoin="round"/><circle cx="12.3" cy="12.3" r="4.4" fill="#2B2D30"/><circle cx="12.3" cy="12.5" r="2.6" fill="#4A4B4F"/><path d="M10.3 10.4a3 3 0 1 0 4 0" fill="none" stroke="#DFE1E5" stroke-width="1.3"/><path d="M12.3 8.4v3.4" stroke="#DFE1E5" stroke-width="1.3"/></svg>
<div class="a ui b" style="left:55px;top:256px;line-height:24px;font-size:13.6px">McpServerApplication (2)</div>
</div>
<div class="a" style="left:371px;top:77px;width:1378px;height:280px;background:#1E1F22;overflow:hidden">
<div class="a" style="left:11px;top:213px;width:1084px;height:22px;background:#214283"></div>
<div class="a" style="left:1094px;top:214px;width:2px;height:20px;background:#CED0D6"></div>
<div class="a m" style="left:11px;top:-6px;line-height:22px">2025-11-22T21:43:18.104+08:00  <span style="color:#C9A31C">WARN</span> <span style="color:#C77DD0">3552</span> --- [           main] <span style="color:#2AACB8">o.s.m.p.r.<span style="text-decoration:underline dotted;text-underline-offset:2px">AsyncMcpResourceProvider</span></span>       : No resource methods found in the provided resource objects: []</div>
<div class="a m" style="left:11px;top:16px;line-height:22px">2025-11-22T21:43:18.106+08:00  <span style="color:#C9A31C">WARN</span> <span style="color:#C77DD0">3552</span> --- [           main] <span style="color:#2AACB8">o.s.m.p.prompt.<span style="text-decoration:underline dotted;text-underline-offset:2px">AsyncMcpPromptProvider</span></span>    : No prompt methods found in the provided prompt objects: []</div>
<div class="a m" style="left:11px;top:38px;line-height:22px">2025-11-22T21:43:18.108+08:00  <span style="color:#C9A31C">WARN</span> <span style="color:#C77DD0">3552</span> --- [           main] <span style="color:#2AACB8">o.s.m.p.c.<span style="text-decoration:underline dotted;text-underline-offset:2px">AsyncMcpCompleteProvider</span></span>       : No async complete methods found in the provided complete objects: []</div>
<div class="a m" style="left:11px;top:60px;line-height:22px">2025-11-22T21:43:18.111+08:00  <span style="color:#C9A31C">WARN</span> <span style="color:#C77DD0">3552</span> --- [           main] <span style="color:#2AACB8">o.s.m.p.tool.<span style="text-decoration:underline dotted;text-underline-offset:2px">AsyncMcpToolProvider</span></span>        : No tool methods found in the provided tool objects: []</div>
<div class="a m" style="left:11px;top:82px;line-height:22px">2025-11-22T21:43:18.118+08:00  <span style="color:#5FB236">INFO</span> <span style="color:#C77DD0">3552</span> --- [           main] <span style="color:#2AACB8">o.s.a.m.s.c.a.<span style="text-decoration:underline dotted;text-underline-offset:2px">McpServerAutoConfiguration</span></span> : Enable tools capabilities, notification: true</div>
<div class="a m" style="left:11px;top:104px;line-height:22px">2025-11-22T21:43:18.119+08:00  <span style="color:#5FB236">INFO</span> <span style="color:#C77DD0">3552</span> --- [           main] <span style="color:#2AACB8">o.s.a.m.s.c.a.<span style="text-decoration:underline dotted;text-underline-offset:2px">McpServerAutoConfiguration</span></span> : Registered tools: 2</div>
<div class="a m" style="left:11px;top:126px;line-height:22px">2025-11-22T21:43:18.119+08:00  <span style="color:#5FB236">INFO</span> <span style="color:#C77DD0">3552</span> --- [           main] <span style="color:#2AACB8">o.s.a.m.s.c.a.<span style="text-decoration:underline dotted;text-underline-offset:2px">McpServerAutoConfiguration</span></span> : Enable resources capabilities, notification: true</div>
<div class="a m" style="left:11px;top:148px;line-height:22px">2025-11-22T21:43:18.119+08:00  <span style="color:#5FB236">INFO</span> <span style="color:#C77DD0">3552</span> --- [           main] <span style="color:#2AACB8">o.s.a.m.s.c.a.<span style="text-decoration:underline dotted;text-underline-offset:2px">McpServerAutoConfiguration</span></span> : Enable resources templates capabilities, notification: true</div>
<div class="a m" style="left:11px;top:170px;line-height:22px">2025-11-22T21:43:18.120+08:00  <span style="color:#5FB236">INFO</span> <span style="color:#C77DD0">3552</span> --- [           main] <span style="color:#2AACB8">o.s.a.m.s.c.a.<span style="text-decoration:underline dotted;text-underline-offset:2px">McpServerAutoConfiguration</span></span> : Enable prompts capabilities, notification: true</div>
<div class="a m" style="left:11px;top:192px;line-height:22px">2025-11-22T21:43:18.120+08:00  <span style="color:#5FB236">INFO</span> <span style="color:#C77DD0">3552</span> --- [           main] <span style="color:#2AACB8">o.s.a.m.s.c.a.<span style="text-decoration:underline dotted;text-underline-offset:2px">McpServerAutoConfiguration</span></span> : Enable completions capabilities</div>
<div class="a m" style="left:11px;top:214px;line-height:22px">2025-11-22T21:43:18.348+08:00  <span style="color:#5FB236">INFO</span> <span style="color:#C77DD0">3552</span> --- [           main] <span style="color:#2AACB8">o.s.b.web.embedded.netty.<span style="text-decoration:underline dotted;text-underline-offset:2px">NettyWebServer</span></span>  : Netty started on port 8080 (http)</div>
<div class="a m" style="left:11px;top:236px;line-height:22px">2025-11-22T21:43:18.356+08:00  <span style="color:#5FB236">INFO</span> <span style="color:#C77DD0">3552</span> --- [           main] <span style="color:#2AACB8">o.s.a.m.s.server.<span style="text-decoration:underline dotted;text-underline-offset:2px">McpServerApplication</span></span>    : Started McpServerApplication in 2.056 seconds (process running for 2.3)</div>
</div>
<div class="a" style="left:1749px;top:77px;width:35px;height:280px;background:#2B2D30;border-right:1px solid #1E1F22"></div>
<svg style="left:1761px;top:87px" width="8" height="12" viewBox="0 0 8 12"><path d="M6 1.5L2 6l4 4.5" fill="none" stroke="#8C8F94" stroke-width="1.1"/></svg>
<div class="a ui" style="left:1758px;top:111px;width:16px;height:66px;writing-mode:vertical-rl;font-size:11.6px;line-height:16px;color:#DFE1E5">Performance</div>
<svg style="left:1795px;top:86px" width="16" height="16" viewBox="0 0 16 16"><path d="M8 2.5v12M3.5 7L8 2.5 12.5 7" fill="none" stroke="#CED0D6" stroke-width="1.1"/></svg>
<svg style="left:1795px;top:113px" width="16" height="16" viewBox="0 0 16 16"><path d="M8 1.5v12M3.5 9L8 13.5 12.5 9" fill="none" stroke="#CED0D6" stroke-width="1.1"/></svg>
<svg style="left:1795px;top:139px" width="16" height="16" viewBox="0 0 16 16"><path d="M1.5 3.5h13M1.5 8h10a2.5 2.5 0 0 1 0 5H8.5M1.5 12.5h4M10 11l-1.5 2 1.5 2" fill="none" stroke="#CED0D6" stroke-width="1.1"/></svg>
<svg style="left:1795px;top:165px" width="16" height="16" viewBox="0 0 16 16"><path d="M1.5 3.5h5M1.5 7.5h5M1.5 11.5h5M1.5 15h13M11 2v11M8 10l3 3 3-3" fill="none" stroke="#CED0D6" stroke-width="1.1"/></svg>
<svg style="left:1795px;top:191px" width="16" height="16" viewBox="0 0 16 16"><path d="M4.5 6.5V2.5h7v4M2.5 6.5h11a1 1 0 0 1 1 1v5h-3M4.5 12.5h-3v-5a1 1 0 0 1 1-1M4.5 10.5h7v4h-7z" fill="none" stroke="#5A5D63" stroke-width="1.1"/></svg>
<svg style="left:1795px;top:217px" width="16" height="16" viewBox="0 0 16 16"><path d="M1.5 3.5h13M5.5 3.5V1.5h5v2M3 3.5l1 11h8l1-11M6.5 6.5v5.5M9.5 6.5v5.5" fill="none" stroke="#CED0D6" stroke-width="1.1"/></svg>
</div>
<div class="a" style="left:0;top:983px;width:1832px;height:1px;background:#1C1D20"></div>
</body></html>
